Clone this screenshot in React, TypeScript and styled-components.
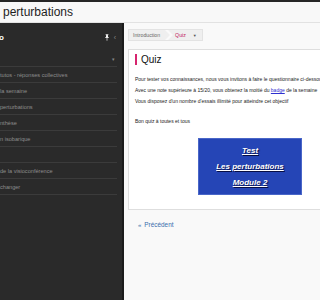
import React from "react";
import styled, { createGlobalStyle } from "styled-components";

const Global = createGlobalStyle`
  html, body { margin: 0; padding: 0; background: #f9f9f9; }
  body { font-family: "Liberation Sans", Arial, sans-serif; overflow: hidden; }
  * { box-sizing: border-box; }
`;

const Page = styled.div`
  width: 320px;
  height: 300px;
  overflow: hidden;
  display: flex;
  flex-direction: column;
  border-top: 2px solid #262626;
  background: #f9f9f9;
`;

const Header = styled.header`
  height: 21px;
  flex: none;
  display: flex;
  align-items: center;
  padding-left: 3px;
  background: #f8f8f8;
  border-bottom: 1px solid #e2e2e2;
  font-size: 12px;
  color: #1e1e1e;
  white-space: nowrap;
`;

const Body = styled.div`
  flex: 1;
  display: flex;
  min-height: 0;
`;

const Sidebar = styled.nav`
  width: 124px;
  flex: none;
  background: #2a2a2a;
  border-right: 2px solid #1b1b1b;
  display: flex;
  flex-direction: column;
  overflow: hidden;
`;

const SideHead = styled.div`
  height: 28px;
  display: flex;
  align-items: center;
  padding-right: 6px;
  gap: 5px;
`;

const SideTitle = styled.span`
  flex: 1;
  font-size: 8px;
  font-weight: bold;
  color: #ffffff;
  margin-left: -1px;
`;

const Chev = styled.span`
  font-size: 7px;
  color: #888;
  line-height: 1;
`;

const Row = styled.div<{ $caret?: boolean }>`
  height: 16px;
  margin-right: 5px;
  border-bottom: 1px solid #3b3b3b;
  display: flex;
  align-items: center;
  justify-content: ${(p) => (p.$caret ? "flex-end" : "flex-start")};
  padding-right: ${(p) => (p.$caret ? "2px" : "0")};
  font-size: 5.6px;
  color: #8e8e8e;
  white-space: nowrap;
`;

const Caret = styled.span`
  font-size: 5px;
  color: #888;
`;

const Main = styled.main`
  width: 300px;
  flex: none;
  padding: 6px 0 0 4px;
  display: flex;
  flex-direction: column;
  align-items: flex-start;
`;

const Crumbs = styled.div`
  height: 12px;
  display: flex;
  align-items: center;
  background: #efefef;
  border: 1px solid #e3e3e3;
  font-size: 5.2px;
  white-space: nowrap;
`;

const Crumb = styled.span<{ $active?: boolean }>`
  height: 100%;
  display: flex;
  align-items: center;
  padding: 0 ${(p) => (p.$active ? "4px" : "5px")} 0 ${(p) => (p.$active ? "2px" : "4px")};
  color: ${(p) => (p.$active ? "#c2185b" : "#666")};
`;

const Arrow = styled.svg`
  width: 8px;
  height: 10px;
  flex: none;
`;

const CrumbCaret = styled.span`
  font-size: 4px;
  color: #555;
  padding: 0 5px 0 3px;
`;

const Card = styled.section`
  margin-top: 8px;
  width: 300px;
  background: #fff;
  border: 1px solid #dedede;
  padding: 4px 0 14px 6px;
`;

const Title = styled.h1`
  margin: 0;
  border-left: 2px solid #d6246e;
  padding-left: 4px;
  height: 11px;
  display: flex;
  align-items: center;
  font-size: 10px;
  font-weight: normal;
  color: #111;
`;

const Text = styled.p`
  margin: 0;
  font-size: 5px;
  line-height: 11px;
  color: #222;
  white-space: nowrap;
`;

const TextBlock = styled.div`
  margin-top: 9px;
  display: flex;
  flex-direction: column;
`;

const Badge = styled.a`
  color: #2f2fd0;
  text-decoration: underline;
`;

const Blank = styled.div`
  height: 9px;
`;

const QuizBox = styled.a`
  margin: 11px 0 0 63px;
  width: 104px;
  height: 57px;
  background: #2545b6;
  border: 1px solid #4966c8;
  display: flex;
  flex-direction: column;
  align-items: center;
  justify-content: center;
  gap: 6px;
  text-decoration: none;
`;

const BoxLine = styled.span`
  font-size: 8px;
  line-height: 10px;
  font-weight: bold;
  font-style: italic;
  text-decoration: underline;
  color: #fff;
  text-shadow: 1px 1px 1px rgba(0, 0, 40, 0.8);
  white-space: nowrap;
`;

const Prev = styled.a`
  margin: 11px 0 0 10px;
  display: flex;
  align-items: center;
  gap: 3px;
  font-size: 6.4px;
  color: #3a6ead;
  text-decoration: none;
`;

const PrevIcon = styled.span`
  font-size: 6px;
  color: #3a6ead;
`;

const items = [
  "tutos - réponses collectives",
  " la semaine",
  " perturbations",
  "nthèse",
  "n isobarique",
  "",
  "de la visioconférence",
  "changer",
];

export default function App() {
  return (
    <>
      <Global />
      <Page>
        <Header>perturbations</Header>
        <Body>
          <Sidebar>
            <SideHead>
              <SideTitle>o</SideTitle>
              <svg width="4" height="7" viewBox="0 0 5 8">
                <rect x="0.8" y="0" width="3.4" height="1" fill="#fff" />
                <rect x="1.3" y="1" width="2.4" height="3" fill="#fff" />
                <rect x="0.3" y="3.6" width="4.4" height="1" fill="#fff" />
                <rect x="2.1" y="4.6" width="0.8" height="3.4" fill="#fff" />
              </svg>
              <Chev>‹</Chev>
            </SideHead>
            <Row $caret>
              <Caret>▾</Caret>
            </Row>
            {items.map((t, i) => (
              <Row key={i}>{t}</Row>
            ))}
          </Sidebar>
          <Main>
            <Crumbs>
              <Crumb>Introduction</Crumb>
              <Arrow viewBox="0 0 8 10" preserveAspectRatio="none">
                <polygon points="0,0 3,0 8,5 3,10 0,10 5,5" fill="#fafafa" />
              </Arrow>
              <Crumb $active>Quiz</Crumb>
              <CrumbCaret>▼</CrumbCaret>
            </Crumbs>
            <Card>
              <Title>Quiz</Title>
              <TextBlock>
                <Text>
                  Pour tester vos connaissances, nous vous invitons à faire le questionnaire ci-dessous
                </Text>
                <Text>
                  Avec une note supérieure à 15/20, vous obtenez la moitié du <Badge>badge</Badge> de la semaine
                </Text>
                <Text>Vous disposez d'un nombre d'essais illimité pour atteindre cet objectif</Text>
                <Blank />
                <Text>Bon quiz à toutes et tous</Text>
              </TextBlock>
              <QuizBox>
                <BoxLine>Test</BoxLine>
                <BoxLine>Les perturbations</BoxLine>
                <BoxLine>Module 2 </BoxLine>
              </QuizBox>
            </Card>
            <Prev>
              <PrevIcon>«</PrevIcon>
              Précédent
            </Prev>
          </Main>
        </Body>
      </Page>
    </>
  );
}
